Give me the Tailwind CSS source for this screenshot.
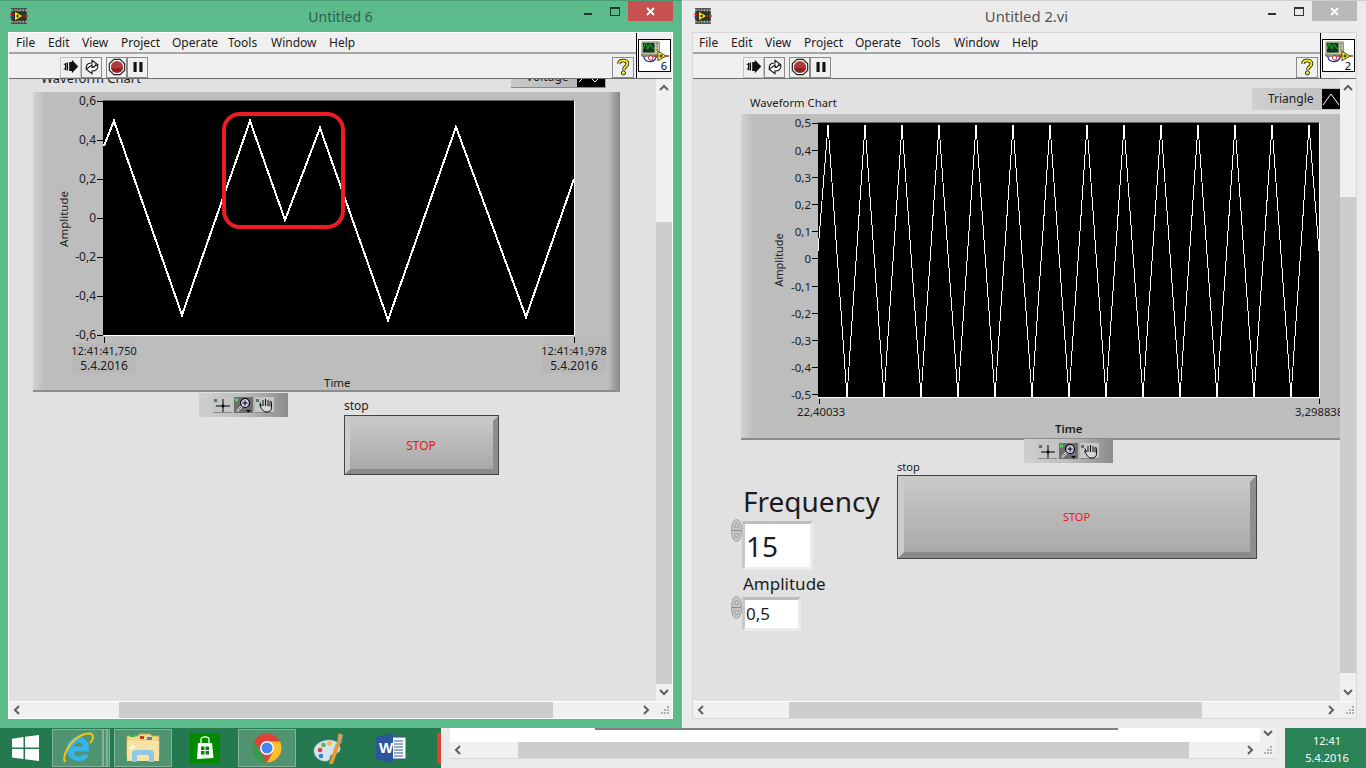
<!DOCTYPE html>
<html>
<head>
<meta charset="utf-8">
<script src="https://cdn.jsdelivr.net/npm/@tailwindcss/browser@4"></script>
</head>
<body class="m-0 overflow-hidden">
<svg class="absolute w-0 h-0">
  <defs>
    <symbol id="tb" viewBox="0 0 16 16">
      <rect x="1" y="1" width="14" height="14" fill="#444"/>
      <path d="M1 3h14M1 13h14" stroke="#bbb" stroke-width="1.4" stroke-dasharray="1.5 1"/>
      <rect x="2" y="4" width="12" height="8" fill="#26351f"/>
      <path d="M4 3.5L11.5 8L4 12.5Z" fill="#f2e21c" stroke="#111" stroke-width=".7"/>
      <path d="M0 6.5H4" stroke="#d02020"/><path d="M0 9H4" stroke="#2040d0"/><path d="M11 8H16" stroke="#d02020"/>
      <path d="M5.5 8H8M6.7 6.8V9.2" stroke="#111" stroke-width=".8"/>
    </symbol>
    <symbol id="run" viewBox="0 0 20 20">
      <path d="M8 4.500L11 4.500L11 2L18 9.500L11 17L11 14.500L8 14.500Z" fill="#111"/>
      <path d="M2 7h1M2 12h1M4 5.500v8M6 5v9" stroke="#111" stroke-width="1.500"/>
    </symbol>
    <symbol id="loop" viewBox="0 0 20 20">
      <path d="M3.500 11C3.500 7 6 5.500 10 5.500V2.500L16.500 7.500L10 12.500V9.500C7.500 9.500 6.500 10.500 6 12.500Z" fill="#fff" stroke="#111" stroke-width="1.200"/>
      <path d="M16.500 9C16.500 13 14 14.500 10 14.500V17.500L3.500 12.500L10 7.500V10.500C12.500 10.500 13.500 9.500 14 7.500Z" fill="#fff" stroke="#111" stroke-width="1.200"/>
    </symbol>
    <symbol id="stopb" viewBox="0 0 20 20">
      <path d="M6.500 1.500H13.500L18.500 6.500V13.500L13.500 18.500H6.500L1.500 13.500V6.500Z" fill="#fff" stroke="#222" stroke-width="1.300"/>
      <circle cx="10" cy="10" r="6.800" fill="#b23a3a"/>
      <path d="M3.400 11H16.600A6.800 6.800 0 0 1 3.400 11Z" fill="#8c2222"/>
    </symbol>
    <symbol id="pause" viewBox="0 0 20 20">
      <path d="M5 4.500H8.500V15.500H5ZM11.500 4.500H15V15.500H11.500Z" fill="#111"/>
    </symbol>
    <symbol id="vi" viewBox="0 0 32 32">
      <rect x="3" y="2" width="18" height="15" fill="#c8c7a6" stroke="#555" stroke-width=".6"/>
      <rect x="4" y="3" width="12" height="10" fill="#0c3a1c"/>
      <path d="M4.500 9C6 2 7.500 2 8.500 8C9.500 12 10 4 11.500 4.500C13 4 13.500 11 15.500 8" fill="none" stroke="#15d030" stroke-width="1"/>
      <path d="M17.500 4h2M17.500 7h2M17.500 10h2" stroke="#666" stroke-width="1.200"/>
      <path d="M5 17C6 24 16 24 18 17" fill="none" stroke="#1d2ba8" stroke-width="1.300"/>
      <circle cx="12" cy="18.500" r="2.300" fill="#fff" stroke="#d02020"/>
      <path d="M2 15.500H23M26 16.500H31" stroke="#111" stroke-width=".6"/>
      <path d="M14.500 16.500H21M27 16.500H31" stroke="#e01010" stroke-width="1"/>
      <path d="M19.500 11.500L28 16.500L19.500 21.500Z" fill="#f7ec1c" stroke="#222" stroke-width=".8"/>
      <path d="M21 16.500H24.500M22.700 14.800V18.200" stroke="#111"/>
    </symbol>
    <symbol id="help" viewBox="0 0 20 20">
      <path d="M5.500 6.500C5.500 1.500 15 1.500 15 6.500C15 10 10.800 9.500 10.800 13" fill="none" stroke="#111" stroke-width="4"/>
      <path d="M5.500 6.500C5.500 1.500 15 1.500 15 6.500C15 10 10.800 9.500 10.800 13" fill="none" stroke="#f8f020" stroke-width="2.200"/>
      <circle cx="10.500" cy="16.500" r="2.300" fill="#f8f020" stroke="#111"/>
    </symbol>
    <symbol id="cross" viewBox="0 0 19 16">
      <rect x="1" y="2" width="3" height="3" fill="#557a55"/>
      <path d="M3 9H17M10 2V15" stroke="#000" stroke-width="1"/><circle cx="10" cy="9" r="1.500" fill="#000"/>
    </symbol>
    <symbol id="zoomg" viewBox="0 0 19 16">
      <rect x="1" y="1.500" width="3" height="3" fill="#42e042"/>
      <circle cx="11" cy="6" r="4.500" fill="#c8c8ee" stroke="#000" stroke-width="1.200"/>
      <path d="M8.500 6H13.500M11 3.500V8.500" stroke="#000"/>
      <path d="M7.500 9.500L3 14.500" stroke="#fff" stroke-width="2"/><path d="M7.500 9.500L3 14.500" stroke="#000" stroke-width=".7"/>
      <path d="M12 13H17L14.500 15.500Z" fill="#000"/>
    </symbol>
    <symbol id="hand" viewBox="0 0 19 16">
      <rect x="1" y="2" width="3" height="3" fill="#557a55"/>
      <path d="M6 9L5 5.500M8 9V3M10.500 9V2M13 9V3M15 9.500V5C15 4 16.500 4 16.500 5.500V11C16.500 14 14 15 11 15C8 15 7 12 5 9C4 7.500 6 7 7 8.500" fill="#d8d8d8" stroke="#000" stroke-width=".9"/>
    </symbol>
    <symbol id="up" viewBox="0 0 12 12"><path d="M2 8L6 4L10 8" fill="none" stroke="#606060" stroke-width="2"/></symbol>
    <symbol id="dn" viewBox="0 0 12 12"><path d="M2 4L6 8L10 4" fill="none" stroke="#606060" stroke-width="2"/></symbol>
    <symbol id="lf" viewBox="0 0 12 12"><path d="M8 2L4 6L8 10" fill="none" stroke="#606060" stroke-width="2"/></symbol>
    <symbol id="rt" viewBox="0 0 12 12"><path d="M4 2L8 6L4 10" fill="none" stroke="#606060" stroke-width="2"/></symbol>
    <symbol id="grip" viewBox="0 0 12 12"><path d="M8 2h2v2H8ZM5 5h2v2H5ZM8 5h2v2H8ZM2 8h2v2H2ZM5 8h2v2H5ZM8 8h2v2H8Z" fill="#b0b0b0"/></symbol>
    <symbol id="spin" viewBox="0 0 11 23">
      <path d="M5.500 .5C8 .5 10.500 4 10.500 11.500C10.500 19 8 22.500 5.500 22.500C3 22.500 .5 19 .5 11.500C.5 4 3 .5 5.500 .5Z" fill="#c4c4c4" stroke="#a0a0a0"/>
      <path d="M1 11.500H10" stroke="#8a8a8a"/><path d="M5.500 4L3.500 8H7.500Z" fill="#e8e8e8" stroke="#666" stroke-width=".5"/><path d="M5.500 19L3.500 15H7.500Z" fill="#e8e8e8" stroke="#666" stroke-width=".5"/>
    </symbol>
  </defs>
</svg>

<div class="relative w-[1366px] h-[768px] overflow-hidden bg-[#24794e] font-['Noto_Sans','Open_Sans',sans-serif] text-[#1c1c1c]">

  <!-- taskbar -->
  <div class="absolute left-0 right-0 bottom-0 h-10 flex items-center bg-[#24794e]">
    <div class="w-[52px] h-10 flex items-center justify-center">
      <svg class="w-[27px] h-[26px] ml-[-1px]" viewBox="0 0 27 26"><path d="M0 3.700L11.500 2V12.400H0ZM13 1.800L27 0V12.400H13ZM0 14H11.500V24L0 22.400ZM13 14H27V26L13 24.200Z" fill="#fff"/></svg>
    </div>
    <div class="w-[51px] h-[38px] flex items-center justify-center bg-white/20 border border-white/30">
      <svg class="w-[32px] h-[32px]" viewBox="0 0 32 32"><path d="M27 16.500C27 9 22 5 16.500 5C10 5 5 10.500 5 17C5 24 10 29 17 29C22 29 25.500 26.500 27 22.500H20.500C19.500 24 18.500 24.500 17 24.500C14 24.500 12 22.500 12 19.500H27ZM12 14.500C12.500 12 14 10.500 16.500 10.500C19 10.500 20.500 12 20.700 14.500Z" fill="#38b4ea"/><path d="M3 30C0 24 8 8 20 3C26 .5 31 1 31 5C31 7 30 9 28 11" fill="none" stroke="#f5c518" stroke-width="2"/></svg>
    </div>
    <div class="w-[4px] h-[38px] bg-white/20 border border-white/30"></div>
    <div class="w-[3px] h-[38px] bg-white/20 border border-white/30"></div>
    <div class="w-[58px] h-[38px] ml-[4px] flex items-center justify-center bg-white/20 border border-white/30">
      <svg class="w-[34px] h-[30px]" viewBox="0 0 34 30"><path d="M1 3H12L14 1H24L26 3H33V24H1Z" fill="#f2d98a" stroke="#c9a95c"/><path d="M4 1.500H9V4H4Z" fill="#2fb24a"/><path d="M14 3H18V6H14Z" fill="#c03a30"/><path d="M21 4H26V7H21Z" fill="#3a8fd0"/><path d="M1 8H33V28H1Z" fill="#f6e4a4"/><path d="M6 29V20C6 18 8 17 10 17H24C26 17 28 18 28 20V29H23V22H11V29Z" fill="#8fc7e8"/><path d="M6 12L9 15M3 15H7" stroke="#fff" stroke-width="1.500"/></svg>
    </div>
    <div class="w-[66px] h-10 flex items-center justify-center">
      <svg class="w-[30px] h-[30px]" viewBox="0 0 30 30"><rect width="30" height="30" fill="#008a00"/><path d="M8 10H22L23.500 25L7 26Z" fill="#fff"/><path d="M11 10V6.500C11 3 19 3 19 6.500V10" fill="none" stroke="#fff" stroke-width="1.300"/><path d="M11 13.500H14.500V17H11ZM15.500 13.500H19V17H15.500ZM11 18H14.500V21.500H11ZM15.500 18H19V21.500H15.500Z" fill="#008a00"/></svg>
    </div>
    <div class="w-[58px] h-[38px] flex items-center justify-center bg-white/20 border border-white/30">
      <svg class="w-[30px] h-[30px]" viewBox="0 0 30 30"><circle cx="15" cy="15" r="14.500" fill="#db4437"/><path d="M2 8L9.500 21L15 29.500C7 29.500 .5 23 .5 15C.5 12.500 1 10 2 8Z" fill="#2f9e50"/><path d="M15 8.500H28C29 10.500 29.500 12.700 29.500 15C29.500 23 23 29.500 15 29.500L21.300 18.500Z" fill="#fbc02d"/><circle cx="15" cy="15" r="7" fill="#fff"/><circle cx="15" cy="15" r="5.500" fill="#4285f4"/></svg>
    </div>
    <div class="w-[64px] h-10 flex items-center justify-center">
      <svg class="w-[33px] h-[33px]" viewBox="0 0 33 33"><path d="M2 20C1 13 9 8 17 8C24 8 29 12 28 18C27 22 22 21 19 23C17 25 19 28 15 29C9 30 3 26 2 20Z" fill="#d4e3ee" stroke="#9db4c6" stroke-width=".6"/><circle cx="8" cy="18" r="2.300" fill="#d8453c"/><circle cx="11.500" cy="13" r="2.300" fill="#6ab04c"/><circle cx="17.500" cy="11.500" r="2.300" fill="#eebc2c"/><circle cx="9" cy="24" r="2.300" fill="#3b82c4"/><path d="M17 32L24 11L28 12L21 32Z" fill="#e79a2e"/><path d="M25 11L26.500 1L31 3L29 12Z" fill="#c8a268"/></svg>
    </div>
    <div class="relative w-[30px] h-[30px] ml-[16px]">
      <svg class="w-[30px] h-[30px]" viewBox="0 0 30 30"><path d="M14 4H30V26H14Z" fill="#fff" stroke="#2b579a"/><path d="M18 8H27M18 11H27M18 14H27M18 17H27M18 20H27M18 23H27" stroke="#2b579a" stroke-width="1.100"/><path d="M0 4L17 0V30L0 26Z" fill="#2b579a"/></svg>
      <span class="absolute left-[3px] top-[6px] text-white text-[15px] font-bold leading-[18px] font-['Liberation_Sans',sans-serif]">W</span>
    </div>
    <div class="w-[4px] h-[31px] ml-[31px] bg-[#d8432f]"></div>
    <!-- window behind, showing above the taskbar -->
    <div class="w-[844px] h-10 bg-[#ebebeb] flex flex-col">
      <div class="ml-[9px] mr-[9px] h-[14px] relative flex bg-white">
        <div class="absolute left-[145px] top-0 w-[523px] h-[2px] bg-[#808080]"></div>
        <div class="flex-1"></div>
        <div class="w-[16px] bg-[#f0f0f0] flex items-start justify-center"><svg class="w-3 h-3 mt-[-1px]"><use href="#dn"/></svg></div>
      </div>
      <div class="ml-[9px] mr-[9px] h-[17px] flex items-center bg-[#f0f0f0] border-b border-[#d8d8d8]">
        <svg class="w-3 h-3 ml-[2px]"><use href="#lf"/></svg>
        <div class="ml-[54px] w-[671px] h-[16px] bg-[#cdcdcd]"></div>
        <svg class="w-3 h-3 ml-[55px]"><use href="#rt"/></svg>
        <svg class="w-3 h-3 ml-[6px]"><use href="#grip"/></svg>
      </div>
    </div>
    <div class="flex-1 h-10 pt-[2px] bg-[#2a8357] flex flex-col items-center justify-center text-white text-[11px] leading-[17px]">
      <span class="ml-[3px]">12:41</span>
      <span class="ml-[3px]">5.4.2016</span>
    </div>
  </div>

  <!-- LEFT WINDOW -->
  <div class="absolute left-0 top-0 w-[682px] h-[728px] bg-[#5bbb8b] border-t border-[#4a9c74] flex flex-col">
    <div class="relative h-[31px] shrink-0 flex items-center justify-center text-[#2d5f48] text-[14px]">
      <svg class="absolute left-[10px] top-[6px] w-[18px] h-[18px]"><use href="#tb"/></svg>
      <span class="ml-[-1px] mt-[-1px]">Untitled 6</span>
      <div class="absolute left-[584px] top-[12px] w-[8px] h-[2px] bg-[#23392e]"></div>
      <div class="absolute left-[610px] top-[6px] w-[10px] h-[9px] border border-t-2 border-[#23392e]"></div>
      <div class="absolute left-[628px] top-0 w-[45px] h-[20px] bg-[#c75050] flex items-center justify-center">
        <svg class="w-[9px] h-[9px]" viewBox="0 0 9 9"><path d="M1 1L8 8M8 1L1 8" stroke="#fff" stroke-width="1.800"/></svg>
      </div>
    </div>
    <div class="ml-[8px] w-[665px] h-[687px] border border-white bg-[#f0f0f0] flex flex-col">
      <div class="h-[46px] flex shrink-0 border-b border-[#6f6f6f]">
        <div class="flex-1 flex flex-col">
          <div class="h-[21px] flex items-center pl-[7px] text-[12px] border-b-2 border-[#a6a6a6]">
            <span class="w-[32px]">File</span><span class="w-[34px]">Edit</span><span class="w-[39px]">View</span><span class="w-[51px]">Project</span><span class="w-[56px]">Operate</span><span class="w-[43px]">Tools</span><span class="w-[58px]">Window</span><span>Help</span>
          </div>
          <div class="h-[24px] pt-[2px] flex items-center pl-[51px]">
            <div class="w-[21px] h-[21px] border border-[#c4c4c4] flex items-center justify-center"><svg class="w-[18px] h-[18px]"><use href="#run"/></svg></div>
            <div class="w-[21px] h-[21px] border border-[#8a8a8a] flex items-center justify-center"><svg class="w-[18px] h-[18px]"><use href="#loop"/></svg></div>
            <div class="w-[21px] h-[21px] ml-[4px] border border-[#8a8a8a] flex items-center justify-center"><svg class="w-[18px] h-[18px]"><use href="#stopb"/></svg></div>
            <div class="w-[21px] h-[21px] border border-[#8a8a8a] flex items-center justify-center"><svg class="w-[18px] h-[18px]"><use href="#pause"/></svg></div>
            <div class="w-[22px] h-[21px] ml-[464px] border border-[#8a8a8a] flex items-center justify-center"><svg class="w-[18px] h-[18px]"><use href="#help"/></svg></div>
          </div>
        </div>
        <div class="w-[36px] border-l border-black flex items-start pl-[1px] pt-[6px]">
          <div class="relative w-[33px] h-[33px] bg-white border border-black">
            <svg class="w-full h-full"><use href="#vi"/></svg>
            <span class="absolute right-[3px] bottom-[-3px] text-[11px] text-black">6</span>
          </div>
        </div>
      </div>
      <div class="flex-1 flex min-h-0">
        <div class="relative w-[647px] bg-[#e1e1e1] overflow-hidden">
          <span class="absolute left-[32px] top-[-10px] text-[13px] whitespace-nowrap">Waveform Chart</span>
          <div class="absolute left-[502px] top-[-12px] w-[95px] h-[21px] bg-gradient-to-r from-[#c8c8c8] via-[#bdbdbd] to-[#a8a8a8] border-b border-[#8a8a8a] flex items-center text-[12px]">
            <span class="ml-[15px]">Voltage</span>
            <div class="absolute left-[66px] top-0 w-[28px] h-[20px] bg-black">
              <svg class="w-[28px] h-[20px]" viewBox="0 0 28 20"><path d="M2 15L6 11M15 12L18 15L21 12" fill="none" stroke="#fff"/></svg>
            </div>
          </div>
          <!-- chart frame -->
          <div class="absolute left-[24px] top-[12px] w-[587px] h-[301px] bg-[#bdbdbd] border-t border-[#e4e4e4] border-b-2 border-b-[#8c8c8c]">
            <div class="absolute left-0 top-0 bottom-0 w-[12px] bg-gradient-to-r from-[#d2d2d2] to-[#bdbdbd]"></div>
            <div class="absolute right-0 top-0 bottom-0 w-[12px] bg-gradient-to-r from-[#bdbdbd] to-[#878787]"></div>
            <span class="absolute left-[1px] top-[119px] h-[16px] w-[60px] -rotate-90 text-[11.500px] leading-[16px] text-center">Amplitude</span>
            <!-- y axis -->
            <div class="absolute left-[30px] top-[9px] w-[40px] h-[234px] flex flex-col justify-between text-[12px]">
              <div class="h-0 flex items-center justify-end gap-[1px]"><span>0,6</span><i class="block w-[6px] h-[1px] bg-black"></i></div>
              <div class="h-0 flex items-center justify-end gap-[1px]"><span>0,4</span><i class="block w-[6px] h-[1px] bg-black"></i></div>
              <div class="h-0 flex items-center justify-end gap-[1px]"><span>0,2</span><i class="block w-[6px] h-[1px] bg-black"></i></div>
              <div class="h-0 flex items-center justify-end gap-[1px]"><span>0</span><i class="block w-[6px] h-[1px] bg-black"></i></div>
              <div class="h-0 flex items-center justify-end gap-[1px]"><span>-0,2</span><i class="block w-[6px] h-[1px] bg-black"></i></div>
              <div class="h-0 flex items-center justify-end gap-[1px]"><span>-0,4</span><i class="block w-[6px] h-[1px] bg-black"></i></div>
              <div class="h-0 flex items-center justify-end gap-[1px]"><span>-0,6</span><i class="block w-[6px] h-[1px] bg-black"></i></div>
            </div>
            <!-- plot -->
            <div class="absolute left-[70px] top-[8px] w-[472px] h-[236px] bg-black border-t border-[#666] border-r border-b border-r-white border-b-white">
              <svg class="absolute left-0 top-0" width="471" height="235" viewBox="103 100 471 235" shape-rendering="crispEdges">
                <polyline fill="none" stroke="#fff" stroke-width="2" points="104,145 114,120 182,314 250,120 285,219 320,127 388,319 456,126 526,316 574,178"/>
              </svg>
            </div>
            <div class="absolute left-[71px] top-[245px] w-[1px] h-[6px] bg-black"></div>
            <div class="absolute left-[541px] top-[245px] w-[1px] h-[6px] bg-black"></div>
            <div class="absolute left-[39px] top-[251px] w-[64px] h-[30px] bg-[#b8b8b8] flex flex-col items-center text-[12px] leading-[15px] whitespace-nowrap"><span class="text-[11px]">12:41:41,750</span><span>5.4.2016</span></div>
            <div class="absolute left-[509px] top-[251px] w-[64px] h-[30px] bg-[#b8b8b8] flex flex-col items-center text-[12px] leading-[15px] whitespace-nowrap"><span class="text-[11px]">12:41:41,978</span><span>5.4.2016</span></div>
            <span class="absolute left-[291px] top-[283px] text-[11.500px] leading-[15px]">Time</span>
          </div>
          <!-- tool palette -->
          <div class="absolute left-[190px] top-[314px] w-[89px] h-[24px] bg-gradient-to-r from-[#cfcfcf] via-[#bdbdbd] to-[#8c8c8c] flex items-center pl-[14px] gap-[2px]">
            <div class="w-[19px] h-[16px] bg-[#c6c6c6] border-b border-[#8a8a8a]"><svg class="w-[19px] h-[16px]"><use href="#cross"/></svg></div>
            <div class="w-[19px] h-[16px] bg-[#6e6e6e]"><svg class="w-[19px] h-[16px]"><use href="#zoomg"/></svg></div>
            <div class="w-[19px] h-[16px] bg-[#c6c6c6] border-b border-[#8a8a8a]"><svg class="w-[19px] h-[16px]"><use href="#hand"/></svg></div>
          </div>
          <!-- stop -->
          <span class="absolute left-[335px] top-[318px] text-[12px] leading-[17px]">stop</span>
          <div class="absolute left-[335px] top-[336px] w-[155px] h-[60px] border border-[#444]">
            <div class="w-full h-full border-[5px] border-t-[#c8c8c8] border-l-[#cdcdcd] border-r-[#8e8e8e] border-b-[#8a8a8a] bg-gradient-to-b from-[#c8c8c8] to-[#a9a9a9] flex items-center justify-center text-[12px] text-[#f01010]"><span class="ml-[-1px] mt-[1px]">STOP</span></div>
          </div>
          <!-- red highlight -->
          <div class="absolute left-[213px] top-[33px] w-[123px] h-[117px] border-4 border-[#ed1c24] rounded-[18px]"></div>
        </div>
        <div class="w-[16px] bg-[#f0f0f0] flex flex-col items-center">
          <svg class="w-3 h-3 mt-[3px]"><use href="#up"/></svg>
          <div class="mt-[128px] w-[16px] h-[462px] bg-[#cdcdcd]"></div>
          <svg class="w-3 h-3 mt-[2px]"><use href="#dn"/></svg>
        </div>
      </div>
      <div class="h-[17px] shrink-0 flex items-center border-t border-white bg-[#f0f0f0]">
        <svg class="w-3 h-3 ml-[2px]"><use href="#lf"/></svg>
        <div class="ml-[96px] w-[434px] h-[16px] bg-[#cdcdcd]"></div>
        <svg class="w-3 h-3 ml-[87px]"><use href="#rt"/></svg>
        <svg class="w-3 h-3 ml-[7px]"><use href="#grip"/></svg>
      </div>
    </div>
  </div>

  <!-- RIGHT WINDOW -->
  <div class="absolute left-[682px] top-0 w-[684px] h-[728px] bg-[#ebebeb] border-l border-white border-t border-t-[#d0d0d0] flex flex-col">
    <div class="relative h-[31px] shrink-0 flex items-center justify-center text-[#555] text-[14.800px]">
      <svg class="absolute left-[11px] top-[6px] w-[18px] h-[18px]"><use href="#tb"/></svg>
      <span class="ml-[4px] mt-[-1px]">Untitled 2.vi</span>
      <div class="absolute left-[585px] top-[12px] w-[8px] h-[2px] bg-[#333]"></div>
      <div class="absolute left-[611px] top-[6px] w-[10px] h-[9px] border border-t-2 border-[#333]"></div>
      <div class="absolute left-[629px] top-0 w-[45px] h-[20px] bg-[#b9b9b9] flex items-center justify-center">
        <svg class="w-[9px] h-[9px]" viewBox="0 0 9 9"><path d="M1 1L8 8M8 1L1 8" stroke="#fff" stroke-width="1.800"/></svg>
      </div>
    </div>
    <div class="ml-[9px] w-[665px] h-[687px] border border-[#d8d8d8] bg-[#f0f0f0] flex flex-col">
      <div class="h-[46px] flex shrink-0 border-b border-[#6f6f6f]">
        <div class="flex-1 flex flex-col">
          <div class="h-[21px] flex items-center pl-[6px] text-[12px] border-b-2 border-[#a6a6a6]">
            <span class="w-[32px]">File</span><span class="w-[34px]">Edit</span><span class="w-[39px]">View</span><span class="w-[51px]">Project</span><span class="w-[56px]">Operate</span><span class="w-[43px]">Tools</span><span class="w-[58px]">Window</span><span>Help</span>
          </div>
          <div class="h-[24px] pt-[2px] flex items-center pl-[50px]">
            <div class="w-[21px] h-[21px] border border-[#c4c4c4] flex items-center justify-center"><svg class="w-[18px] h-[18px]"><use href="#run"/></svg></div>
            <div class="w-[21px] h-[21px] border border-[#8a8a8a] flex items-center justify-center"><svg class="w-[18px] h-[18px]"><use href="#loop"/></svg></div>
            <div class="w-[21px] h-[21px] ml-[4px] border border-[#8a8a8a] flex items-center justify-center"><svg class="w-[18px] h-[18px]"><use href="#stopb"/></svg></div>
            <div class="w-[21px] h-[21px] border border-[#8a8a8a] flex items-center justify-center"><svg class="w-[18px] h-[18px]"><use href="#pause"/></svg></div>
            <div class="w-[22px] h-[21px] ml-[465px] border border-[#8a8a8a] flex items-center justify-center"><svg class="w-[18px] h-[18px]"><use href="#help"/></svg></div>
          </div>
        </div>
        <div class="w-[36px] border-l border-black flex items-start pl-[1px] pt-[6px]">
          <div class="relative w-[33px] h-[33px] bg-white border border-black">
            <svg class="w-full h-full"><use href="#vi"/></svg>
            <span class="absolute right-[3px] bottom-[-3px] text-[11px] text-black">2</span>
          </div>
        </div>
      </div>
      <div class="flex-1 flex min-h-0">
        <div class="relative w-[647px] bg-[#e1e1e1] overflow-hidden">
          <span class="absolute left-[57px] top-[15px] text-[11.300px] leading-[17px] whitespace-nowrap">Waveform Chart</span>
          <div class="absolute left-[559px] top-[9px] w-[90px] h-[22px] bg-gradient-to-r from-[#d0d0d0] to-[#bdbdbd] flex items-center text-[12px]">
            <span class="ml-[16px]">Triangle</span>
            <div class="absolute left-[70px] top-[1px] w-[20px] h-[20px] bg-black flex items-center">
              <svg class="w-[17px] h-[20px]" viewBox="0 0 17 20"><path d="M1 16L9 5L17 16" fill="none" stroke="#fff"/></svg>
            </div>
          </div>
          <!-- chart frame -->
          <div class="absolute left-[48px] top-[34px] w-[620px] h-[327px] bg-[#bdbdbd] border-t border-[#e4e4e4] border-b-2 border-b-[#8c8c8c]">
            <div class="absolute left-0 top-0 bottom-0 w-[12px] bg-gradient-to-r from-[#d2d2d2] to-[#bdbdbd]"></div>
            <span class="absolute left-[8px] top-[138px] h-[16px] w-[60px] -rotate-90 text-[11px] leading-[16px] text-center">Amplitude</span>
            <!-- y axis -->
            <div class="absolute left-[30px] top-[9px] w-[47px] h-[272px] flex flex-col justify-between text-[11.500px]">
              <div class="h-0 flex items-center justify-end gap-[1px]"><span>0,5</span><i class="block w-[6px] h-[1px] bg-black"></i></div>
              <div class="h-0 flex items-center justify-end gap-[1px]"><span>0,4</span><i class="block w-[6px] h-[1px] bg-black"></i></div>
              <div class="h-0 flex items-center justify-end gap-[1px]"><span>0,3</span><i class="block w-[6px] h-[1px] bg-black"></i></div>
              <div class="h-0 flex items-center justify-end gap-[1px]"><span>0,2</span><i class="block w-[6px] h-[1px] bg-black"></i></div>
              <div class="h-0 flex items-center justify-end gap-[1px]"><span>0,1</span><i class="block w-[6px] h-[1px] bg-black"></i></div>
              <div class="h-0 flex items-center justify-end gap-[1px]"><span>0</span><i class="block w-[6px] h-[1px] bg-black"></i></div>
              <div class="h-0 flex items-center justify-end gap-[1px]"><span>-0,1</span><i class="block w-[6px] h-[1px] bg-black"></i></div>
              <div class="h-0 flex items-center justify-end gap-[1px]"><span>-0,2</span><i class="block w-[6px] h-[1px] bg-black"></i></div>
              <div class="h-0 flex items-center justify-end gap-[1px]"><span>-0,3</span><i class="block w-[6px] h-[1px] bg-black"></i></div>
              <div class="h-0 flex items-center justify-end gap-[1px]"><span>-0,4</span><i class="block w-[6px] h-[1px] bg-black"></i></div>
              <div class="h-0 flex items-center justify-end gap-[1px]"><span>-0,5</span><i class="block w-[6px] h-[1px] bg-black"></i></div>
            </div>
            <!-- plot -->
            <div class="absolute left-[77px] top-[8px] w-[502px] h-[276px] bg-black border-t border-[#666] border-r border-b border-r-white border-b-white">
              <svg class="absolute left-0 top-0" width="501" height="275" viewBox="818 122 501 275" shape-rendering="crispEdges">
                <polyline fill="none" stroke="#fff" stroke-width="1" points="818,250 828,124 847,396 865,124 884,396 902,124 921,396 939,124 958,396 976,124 995,396 1013,124 1032,396 1050,124 1069,396 1087,124 1106,396 1124,124 1143,396 1161,124 1180,396 1198,124 1217,396 1235,124 1254,396 1272,124 1291,396 1309,124 1319,250"/>
              </svg>
            </div>
            <div class="absolute left-[78px] top-[285px] w-[1px] h-[5px] bg-black"></div>
            <div class="absolute left-[578px] top-[285px] w-[1px] h-[5px] bg-black"></div>
            <span class="absolute left-[56px] top-[290px] text-[11.300px] leading-[15px]">22,40033</span>
            <span class="absolute left-[554px] top-[290px] text-[11.300px] leading-[15px] whitespace-nowrap">3,298838</span>
            <span class="absolute left-[314px] top-[307px] text-[11.500px] leading-[15px] font-semibold">Time</span>
          </div>
          <!-- tool palette -->
          <div class="absolute left-[331px] top-[360px] w-[89px] h-[24px] bg-gradient-to-r from-[#cfcfcf] via-[#bdbdbd] to-[#8c8c8c] flex items-center pl-[14px] gap-[2px]">
            <div class="w-[19px] h-[16px] bg-[#c6c6c6] border-b border-[#8a8a8a]"><svg class="w-[19px] h-[16px]"><use href="#cross"/></svg></div>
            <div class="w-[19px] h-[16px] bg-[#6e6e6e]"><svg class="w-[19px] h-[16px]"><use href="#zoomg"/></svg></div>
            <div class="w-[19px] h-[16px] bg-[#c6c6c6] border-b border-[#8a8a8a]"><svg class="w-[19px] h-[16px]"><use href="#hand"/></svg></div>
          </div>
          <!-- stop -->
          <span class="absolute left-[204px] top-[380px] text-[11px] leading-[15px]">stop</span>
          <div class="absolute left-[204px] top-[396px] w-[360px] h-[84px] border border-[#444]">
            <div class="w-full h-full border-[6px] border-t-[#c8c8c8] border-l-[#cdcdcd] border-r-[#8e8e8e] border-b-[#8a8a8a] bg-gradient-to-b from-[#c8c8c8] to-[#a9a9a9] flex items-center justify-center text-[11px] text-[#f01010]"><span class="ml-[-1px]">STOP</span></div>
          </div>
          <!-- controls -->
          <span class="absolute left-[50px] top-[402px] text-[28px] leading-[40px] whitespace-nowrap">Frequency</span>
          <svg class="absolute left-[38px] top-[440px] w-[11px] h-[23px]"><use href="#spin"/></svg>
          <div class="absolute left-[49px] top-[442px] w-[71px] h-[49px] bg-white border-[3px] border-t-[#bdbdbd] border-l-[#c8c8c8] border-r-[#ececec] border-b-[#ececec] flex items-center pl-[1px] text-[28px]">15</div>
          <span class="absolute left-[50px] top-[493px] text-[17px] leading-[24px] whitespace-nowrap">Amplitude</span>
          <svg class="absolute left-[38px] top-[517px] w-[11px] h-[23px]"><use href="#spin"/></svg>
          <div class="absolute left-[49px] top-[518px] w-[59px] h-[34px] bg-white border-[3px] border-t-[#bdbdbd] border-l-[#c8c8c8] border-r-[#ececec] border-b-[#ececec] flex items-center pl-[1px] text-[17px]">0,5</div>
        </div>
        <div class="w-[16px] bg-[#f0f0f0] flex flex-col items-center">
          <svg class="w-3 h-3 mt-[3px]"><use href="#up"/></svg>
          <div class="mt-[103px] w-[16px] h-[476px] bg-[#cdcdcd]"></div>
          <svg class="w-3 h-3 mt-[13px]"><use href="#dn"/></svg>
        </div>
      </div>
      <div class="h-[17px] shrink-0 flex items-center border-t border-white bg-[#f0f0f0]">
        <svg class="w-3 h-3 ml-[2px]"><use href="#lf"/></svg>
        <div class="ml-[82px] w-[413px] h-[16px] bg-[#cdcdcd]"></div>
        <svg class="w-3 h-3 ml-[123px]"><use href="#rt"/></svg>
        <svg class="w-3 h-3 ml-[7px]"><use href="#grip"/></svg>
      </div>
    </div>
  </div>
</div>
</body>
</html>
